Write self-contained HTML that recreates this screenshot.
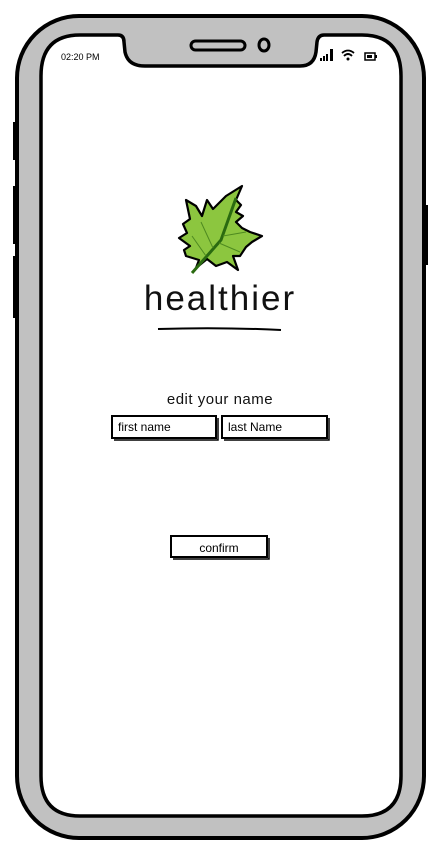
<!DOCTYPE html>
<html><head><meta charset="utf-8"><style>
html,body{margin:0;padding:0;background:#fff;width:443px;height:860px;overflow:hidden}
svg{display:block}
text{font-family:"Liberation Sans",sans-serif}
</style></head><body>
<svg width="443" height="860" viewBox="0 0 443 860">
<rect x="13" y="122" width="5" height="38" fill="#000"/>
<rect x="13" y="186" width="5" height="58" fill="#000"/>
<rect x="13" y="256" width="5" height="62" fill="#000"/>
<rect x="422" y="205" width="6" height="60" fill="#000"/>
<rect x="17" y="16" width="407" height="822" rx="62" fill="#c1c1c1" stroke="#000" stroke-width="4"/>
<path d="M80,35 L118,35 Q124,35 124,42 L125,52 Q128,66 145,66 L300,66 Q314,66 316,52 L317,42 Q318,35 324,35 L362,35 Q401,35 401,76 L401,776 Q401,816 362,816 L80,816 Q41,816 41,776 L41,76 Q41,35 80,35 Z" fill="#fff" stroke="#000" stroke-width="3.5"/>
<rect x="191" y="41" width="54" height="9" rx="4.5" fill="none" stroke="#000" stroke-width="3"/>
<ellipse cx="264" cy="45" rx="5" ry="6" fill="none" stroke="#000" stroke-width="3"/>
<text x="61" y="60" font-size="9" fill="#000">02:20 PM</text>
<rect x="320" y="58" width="2" height="3" fill="#000"/>
<rect x="323" y="56" width="2" height="5" fill="#000"/>
<rect x="326" y="54" width="2" height="7" fill="#000"/>
<rect x="330" y="49" width="3" height="12" fill="#000"/>
<path d="M342,53 Q348,48 354,53 M344,56 Q348,52 352,56" fill="none" stroke="#000" stroke-width="1.8"/>
<circle cx="348" cy="59" r="1.5" fill="#000"/>
<rect x="365" y="53" width="10" height="7" fill="none" stroke="#000" stroke-width="1.5"/>
<rect x="367" y="55" width="5" height="3" fill="#000"/>
<rect x="375" y="55" width="2" height="3" fill="#000"/>
<g stroke="#000" stroke-width="2.2" stroke-linejoin="round">
<path d="M196,268 L199,260 L186,256 L184,250 L190,246 L179,238 L187,233 L183,224 L190,219 L186,200 L196,206 L202,216 L207,200 L213,209 L226,196 L242,186 L236,200 L241,205 L236,212 L243,216 L236,222 L242,228 L250,232 L262,236 L252,242 L246,247 L240,256 L233,256 L238,270 L227,262 L216,266 L207,259 Z" fill="#8cc63f"/>
</g>
<path d="M192,273 L221,240 L236,198" fill="none" stroke="#2a6a10" stroke-width="3"/>
<path d="M206,256 L192,236 M213,248 L201,222 M223,236 L246,232 M219,243 L240,252" fill="none" stroke="#4e8a20" stroke-width="1"/>
<text x="220" y="310" font-size="35" text-anchor="middle" fill="#111" letter-spacing="2">healthier</text>
<path d="M158,329 Q220,327 281,330" fill="none" stroke="#000" stroke-width="2"/>
<text x="220" y="404" font-size="15" text-anchor="middle" fill="#111" letter-spacing="0.5">edit your name</text>
<rect x="112" y="416" width="104" height="22" fill="#fff" stroke="#000" stroke-width="2"/>
<path d="M114,440 L218,440 L218,418" fill="none" stroke="#000" stroke-width="1.5"/>
<text x="118" y="431" font-size="12" fill="#000">first name</text>
<rect x="222" y="416" width="105" height="22" fill="#fff" stroke="#000" stroke-width="2"/>
<path d="M224,440 L329,440 L329,418" fill="none" stroke="#000" stroke-width="1.5"/>
<text x="228" y="431" font-size="12" fill="#000">last Name</text>
<rect x="171" y="536" width="96" height="21" fill="#fff" stroke="#000" stroke-width="2"/>
<path d="M173,559 L269,559 L269,538" fill="none" stroke="#000" stroke-width="1.5"/>
<text x="219" y="552" font-size="12" text-anchor="middle" fill="#000">confirm</text>
</svg>
</body></html>
